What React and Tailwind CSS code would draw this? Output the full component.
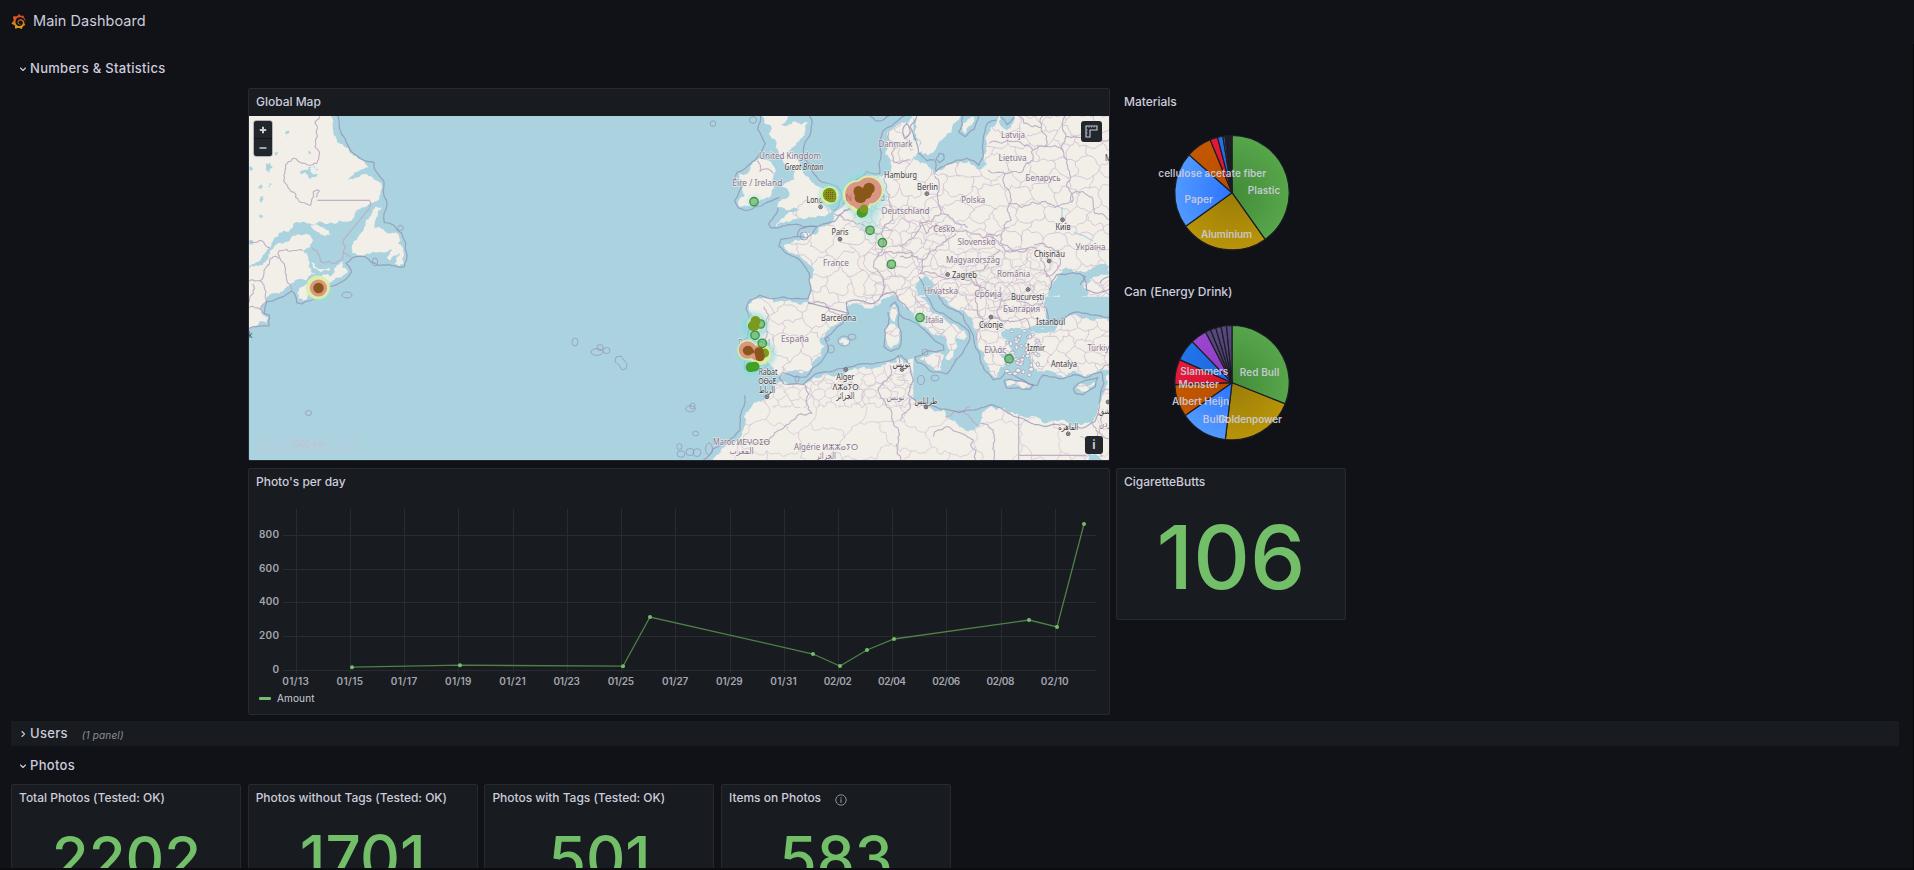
import React from "react";
import { SiGrafana } from "react-icons/si";

/* ---------- geometry helpers ---------- */

function parse(str) {
  return str.trim().split(/\s+/).map((p) => p.split(",").map(Number));
}

function makeRandom(seed) {
  let s = seed % 2147483647;
  return () => {
    s = (s * 16807) % 2147483647;
    return s / 2147483647 - 0.5;
  };
}

// Midpoint displacement: gives coastlines and borders a natural, uneven run.
// Long edges stay straight: they lie outside the frame or are surveyed lines.
function rough(str, amp = 0.3, closed = false, seed = 7, minLen = 5) {
  const pts = typeof str === "string" ? parse(str) : str;
  const rnd = makeRandom(seed * 977 + pts.length * 31);
  const out = [];
  const split = (a, b) => {
    const dx = b[0] - a[0];
    const dy = b[1] - a[1];
    const len = Math.hypot(dx, dy);
    if (len < minLen || len > 115) {
      out.push(b);
      return;
    }
    const k = rnd() * amp;
    const m = [(a[0] + b[0]) / 2 - dy * k, (a[1] + b[1]) / 2 + dx * k];
    split(a, m);
    split(m, b);
  };
  out.push(pts[0]);
  for (let i = 1; i < pts.length; i++) split(pts[i - 1], pts[i]);
  if (closed) split(pts[pts.length - 1], pts[0]);
  return "M" + out.map((p) => p[0].toFixed(1) + " " + p[1].toFixed(1)).join("L") + (closed ? "Z" : "");
}

// Honeycomb of uneven cells, used for administrative regions.
function cells(x0, y0, x1, y1, size, seed) {
  const rnd = makeRandom(seed);
  const grid = [];
  const h = size * 0.62;
  const rows = Math.ceil((y1 - y0) / h) + 1;
  const cols = Math.ceil((x1 - x0) / (size * 0.5)) + 1;
  for (let r = 0; r < rows; r++) {
    grid.push([]);
    for (let c = 0; c < cols; c++) {
      const zig = (r + c) % 2 ? size * 0.14 : -size * 0.14;
      grid[r].push([x0 + c * size * 0.5 + rnd() * size * 0.36, y0 + r * h + zig + rnd() * size * 0.36]);
    }
  }
  let d = "";
  for (let r = 0; r < rows; r++) {
    for (let c = 0; c < cols; c++) {
      if (c + 1 < cols) d += rough([grid[r][c], grid[r][c + 1]], 0.6, false, r * 50 + c + 3, 5);
      if (r + 1 < rows && (r + c) % 2) d += rough([grid[r][c], grid[r + 1][c]], 0.6, false, r * 37 + c + 9, 5);
    }
  }
  return d;
}

/* ---------- map data (three units per pixel in every sheet) ---------- */

const sheets = {
  atlantic: "translate(240 80) scale(0.33333)",
  west: "translate(660 110) scale(0.33333)",
  northeast: "translate(900 110) scale(0.33333)",
  southeast: "translate(900 280) scale(0.33333)",
};

const atlanticLand = [
  "20,100 262,100 278,130 282,165 296,190 325,205 340,228 372,240 384,262 352,275 330,292 316,304 340,298 372,282 398,292 418,306 422,340 400,368 375,382 345,400 320,425 280,430 240,424 200,430 162,428 145,455 100,480 75,520 55,545 20,560",
  "20,572 55,558 85,525 100,505 120,488 155,470 192,464 212,468 218,484 210,503 188,512 205,530 206,560 215,580 228,584 200,600 160,608 135,625 100,640 78,655 62,690 68,706 85,712 82,732 60,724 40,742 20,750",
  "172,640 190,620 215,605 240,590 262,582 285,592 250,620 210,640 190,662 175,655",
  "284,575 292,555 308,544 306,562 324,572 300,592 280,600 268,590",
  "214,546 226,560 248,568 268,560 270,570 240,578 220,565",
  "336,520 350,480 378,420 405,382 428,380 412,410 404,430 402,444 425,446 440,458 470,458 484,480 474,490 492,520 492,552 478,558 464,552 480,520 452,540 440,532 456,508 430,518 390,522 350,524",
  "212,438 248,442 264,450 279,466 255,469 232,456",
];

const atlanticLakes = [
  "78,262 92,250 98,262 90,280 82,272", "186,286 200,270 214,262 212,275 232,282 222,290 205,292",
  "27,262 38,264 36,272 27,272", "58,360 70,352 64,368", "27,484 40,486 36,494 27,492",
  "140,150 146,160 142,172", "216,262 226,270 236,268 226,262", "62,404 68,412 62,416", "60,315 68,322 62,330",
  "84,318 96,312 90,324", "204,216 214,214 210,222", "104,216 114,222 106,226",
];

const westLand = [
  "306,10 386,10 378,34 362,44 402,34 442,36 436,60 420,88 402,110 384,122 398,134 420,160 432,192 452,212 470,228 482,234 522,238 532,254 524,276 500,286 516,306 494,320 462,322 430,328 408,326 392,334 372,338 348,352 356,336 372,324 392,306 420,300 408,294 378,302 352,290 362,272 388,258 384,240 366,228 380,218 402,210 408,184 386,174 374,164 368,142 356,128 346,112 352,96 326,74 334,52 312,36",
  "272,168 292,150 322,150 336,160 346,186 338,206 342,226 330,262 300,270 262,288 240,290 234,276 254,256 246,236 252,214 236,206 238,192 262,190",
  "760,20 730,38 706,52 684,66 680,100 676,132 692,158 682,192 664,202 632,196 602,214 590,244 570,266 550,290 520,312 522,330 498,346 478,352 468,374 446,370 426,362 432,390 402,392 372,404 384,424 414,434 438,454 462,482 456,540 446,578 400,576 342,578 300,566 284,566 264,584 278,632 276,674 254,710 246,724 268,742 262,772 292,768 330,762 342,790 364,800 404,780 436,784 462,752 484,740 494,710 480,686 500,664 534,640 564,612 562,588 600,584 640,592 664,570 696,556 726,580 760,610",
  "690,604 706,584 713,608 702,636 690,622",
  "680,652 702,642 719,656 710,704 692,714 682,700",
  "536,694 556,684 572,692 556,708",
  "760,742 700,758 676,764 652,772 610,770 560,784 500,790 462,802 434,824 392,824 358,816 340,832 320,858 282,878 252,918 246,968 222,1000 182,1020 150,1060 760,1060",
];

const northeastLand = ["-10,150 20,160 50,150 78,160 96,176 104,198 130,176 170,160 206,152 226,170 240,180 262,160 258,110 266,70 290,40 300,10 640,10 640,560 -10,560",
  "34,10 182,10 160,40 156,66 132,84 110,112 84,136 66,130 62,92 44,66",
  "188,56 204,28 222,20 214,46 196,70", "0,98 20,92 26,120 8,126", "34,96 58,92 66,124 44,140 32,122"];
const northeastWater = [
  "300,10 296,34 320,62 334,50 344,28 336,10",
  "52,560 58,510 78,498 98,514 112,560",
  "448,560 460,520 478,492 500,472 516,476 522,486 560,484 578,474 627,466 627,492 584,500 546,520 560,560",
];
const southeastLand = [
  "-10,-10 44,-10 50,20 62,52 86,74 98,102 140,126 176,144 202,168 196,178 166,162 170,186 162,214 148,242 138,238 150,214 142,180 118,166 88,152 52,120 20,84 -10,54",
  "60,240 84,230 132,226 124,248 122,272 98,262",
  "82,-10 102,34 142,62 182,88 216,118 228,150 232,184 252,216 262,250 272,282 292,292 300,262 316,256 314,238 296,222 330,226 344,236 330,200 306,170 304,156 330,144 378,146 402,136 440,118 438,92 430,72 446,34 472,14 494,-10",
  "388,166 404,150 440,152 470,144 486,128 516,106 560,112 640,126 640,272 604,266 560,286 522,272 492,292 470,284 440,270 414,276 400,250 384,212",
  "318,304 350,308 390,314 386,323 322,318",
  "528,322 548,312 592,298 574,320 546,336",
  "640,272 616,288 606,350 592,400 576,430 540,434 480,420 440,430 380,414 356,402 312,384 270,380 246,398 242,426 222,452 192,446 142,414 130,388 92,384 60,372 34,350 -10,360 -10,560 640,560",
  "-10,236 8,240 12,268 26,300 10,334 -10,372",
  "552,-10 566,24 594,34 640,16 640,-10",
];
const southeastWater = ["400,154 414,142 448,144 468,150 440,160 410,160", "536,466 556,500 566,540 584,560 606,560 590,524 574,524"];

const atlanticSea = [
  "288,100 298,145 315,175 340,220 385,245 402,248 405,270 432,305 430,335 440,362 432,400 433,428 460,435 485,460 500,520 493,560 480,562 415,556 375,530 335,535 318,550 335,575 325,590 300,608 270,620 250,645 215,660 185,672 170,668 163,640 155,633 130,650 100,662 80,665 72,700 88,705 88,738 60,738 20,750",
];
const atlanticBorders = [
  "240,100 225,125 232,170 225,200 238,215 230,250 205,255 185,250 160,235 145,245 135,270 150,330 165,340 175,360 213,375 220,335 238,332 228,352",
  "20,612 60,602 80,560 100,530 120,535 134,560 140,600 155,630",
  "60,604 60,688", "118,534 118,512 140,508 188,512", "20,686 58,686 70,700",
  "388,385 310,480 310,518 332,530", "310,518 290,550 245,546 230,512 215,502", "20,485 90,502", "38,612 40,640 27,668",
];
const westSea = [
  "300,10 293,58 316,100 292,142 262,168 232,186 226,210 244,234 224,272 236,294 268,300 304,288 344,268 358,262",
  "354,292 348,312 326,342 332,354 352,354 386,344 430,350 476,348 524,334 548,308 578,284",
  "444,10 456,40 440,90 430,122 442,156 462,192 486,216 530,228 546,258 536,290 520,302",
  "412,380 420,356 440,350 470,350", "470,352 440,384 412,380 392,384 362,388 356,408 372,424 404,440 428,460 448,490 452,530 444,566 400,566 340,566 300,556 270,570 258,596 268,640 264,680 240,712 236,730 256,750 254,778",
  "660,190 620,184 590,208 574,246 548,284", "660,190 664,130 660,90 672,60 716,30 736,16",
  "444,578 566,610 560,576 600,572 640,580 668,556 704,546 716,570 746,600",
  "566,610 520,664 496,690 506,716 484,756 440,800 402,800 370,788 358,804 372,822 430,824 470,790 560,772 640,762 690,752 716,736 720,760",
  "254,856 240,920 240,960 200,996 160,1016 130,1050",
  "690,590 706,576 718,610 716,650 724,680 716,716 692,724 672,710 674,660 686,640 684,606",
  "630,18 646,32 670,30 690,16",
];
const westBorders = [
  "520,312 552,330 600,340 632,360 664,372 672,400 652,440 640,470 668,500 660,560", "550,300 590,312 612,316", "664,372 700,330 690,280 680,230 672,204",
  "444,578 500,590 562,612", "312,590 320,640 314,690 326,740 314,774", "652,440 700,430 760,430",
  "434,826 440,880 456,910 400,930 360,960 300,1000 230,1004", "690,766 660,830 680,890 716,960 722,1050", "292,152 300,184 330,180 340,190", "684,66 700,156 720,160 752,150",
];
const northeastSea = [
  "50,18 30,50 48,92 56,130 80,152 104,150 108,184 140,164 200,144 236,166 250,140 250,80 262,40 290,30", "188,18 176,66 196,80 222,58 236,18",
  "118,130 108,146 118,158 132,148 130,132 118,130", "448,540 470,494 520,488 556,500 540,524", "600,520 612,505 627,500", "8,60 20,40 30,70 14,86 8,60", "300,20 322,44 342,22",
];
const northeastBorders = [
  "104,198 112,250 122,312 60,336 78,372 140,346 196,360 250,384 304,374 334,330 322,296 326,240 314,190 264,180",
  "268,100 300,98 346,94 392,112 400,150 378,160 366,186 316,190", "340,10 372,40 424,52 430,18", "424,52 434,110 400,122", "434,110 490,124 506,180 500,230 516,276 466,292 400,276 330,280",
  "516,276 516,252 576,262 584,310 627,328", "122,312 160,330 204,352", "250,384 312,414 402,412 420,430 444,500", "402,404 450,412 478,440 470,480 438,500", "304,374 300,400 340,424 384,414",
  "60,336 0,410", "0,440 66,450 110,410 168,370", "66,450 60,490 120,500 180,500 250,480 300,420", "490,124 498,80 560,86 627,90", "498,80 496,18", "180,500 240,530 260,540",
];
const southeastSea = [
  "56,-10 76,44 106,92 152,116 206,152 210,176 176,232 162,252 140,282 96,276 52,248 44,232 84,212 132,210 130,196 86,162 36,124 0,104",
  "86,20 130,72 190,106 212,150 222,182 240,226 252,268 280,300 300,296 316,276 360,296 412,316 428,286 478,296 520,284 556,294 604,276 612,310 598,380 584,426 548,444 486,432 438,440 352,412 312,390 270,374 232,388",
  "232,388 122,388 80,376 50,368 24,344 40,300 30,262 18,240 0,224", "432,76 444,120 480,122 520,98 560,100 627,112", "550,-10 560,30 594,40 627,28", "520,326 546,306 594,292 586,320 548,344 526,340 520,326", "312,300 350,302 400,314 390,328 320,324 312,300",
];
const southeastBorders = [
  "232,180 250,130 232,80 240,20 220,-10", "250,130 300,120 340,124 380,116 390,150", "300,120 306,60 300,20", "306,60 370,66 430,70", "356,404 356,560", "136,412 192,398 234,440", "192,398 210,380", "30,356 20,396 0,420",
  "578,430 590,490 606,530", "604,268 627,252", "600,340 627,330", "590,402 606,410 600,460 627,476", "356,526 560,526", "100,470 140,440 220,480 222,560", "242,430 280,450 290,560",
];

const capitals = [
  [820.6, 206.8], [840, 239.2], [845.8, 369.6], [767, 396.8], [926.8, 193.7], [1062.5, 219.7], [1049.2, 261], [947.6, 274.5], [1028, 289.5], [991, 317], [926, 407], [1068.2, 433.8], [902, 369.5], [1108, 402],
];

// text, centre x, baseline, drawn width, kind
const labels = [
  ["United Kingdom", 790, 158.7, 62, "country"],
  ["Great Britain", 804, 169.8, 39, "island"],
  ["Éire / Ireland", 757.3, 185.6, 50, "country"],
  ["London", 819, 202.8, 25, "city"],
  ["Danmark", 895.5, 147, 34, "country"],
  ["Hamburg", 900.5, 177.6, 33, "city"],
  ["Berlin", 927.5, 189.6, 21, "city"],
  ["Nederland", 865, 200.6, 40, "country"],
  ["Deutschland", 905.5, 214, 48, "country"],
  ["Paris", 840, 235.4, 17, "city"],
  ["France", 836, 266.4, 26, "country"],
  ["Barcelona", 838.6, 320.7, 35, "city"],
  ["España", 795, 341.8, 28, "country"],
  ["Portugal", 754, 346.4, 32, "country"],
  ["Rabat", 768, 374.6, 19, "city"],
  ["ⵔⴱⴰⵟ", 767.3, 383.8, 18, "city"],
  ["الرباط", 767, 393.4, 16, "city"],
  ["Alger", 845.3, 380.2, 18, "city"],
  ["ⴷⵣⴰⵢⵔ", 845.5, 389.8, 26, "city"],
  ["الجزائر", 845.4, 398.8, 18, "city"],
  ["Maroc ⵍⵎⵖⵔⵉⴱ", 741.6, 445.2, 57, "country"],
  ["المغرب", 741.6, 454.4, 24, "country"],
  ["Algérie ⵍⵣⵣⴰⵢⵔ", 826, 449.8, 64, "country"],
  ["الجزائر", 826, 459.4, 20, "country"],
  ["تونس", 901.5, 367.2, 18, "city"],
  ["تونس", 895.5, 400.4, 18, "country"],
  ["Latvija", 1013, 138, 24, "country"],
  ["Lietuva", 1012.6, 161.4, 28, "country"],
  ["Беларусь", 1043, 181.4, 35, "country"],
  ["Polska", 973.3, 203.2, 24, "country"],
  ["Česko", 944.2, 231.6, 22, "country"],
  ["Київ", 1063, 229.8, 15, "city"],
  ["Slovensko", 976.6, 245, 38, "country"],
  ["Україна", 1090.5, 249.8, 30, "country"],
  ["Chișinău", 1049.4, 257.4, 31, "city"],
  ["Magyarország", 973, 262.8, 54, "country"],
  ["Zagreb", 964.5, 278, 25, "city"],
  ["România", 1013.6, 276.6, 33, "country"],
  ["Hrvatska", 941, 294, 34, "country"],
  ["Србија", 988, 297, 27, "country"],
  ["București", 1027.6, 300.4, 33, "city"],
  ["България", 1021.6, 312.2, 37, "country"],
  ["Italia", 934.3, 322.8, 18, "country"],
  ["Скопје", 991, 328, 24, "city"],
  ["İstanbul", 1050.6, 324.8, 29, "city"],
  ["Ελλάς", 995.3, 352.6, 22, "country"],
  ["İzmir", 1036, 351.2, 18, "city"],
  ["Türkiye", 1100.5, 350.8, 26, "country"],
  ["Antalya", 1064, 366.6, 26, "city"],
  ["طرابلس", 926, 404.4, 23, "city"],
  ["القاهرة", 1068.2, 430.4, 20, "city"],
  ["دمشق", 1108, 413.5, 18, "city"],
  ["الأردن", 1108, 427, 18, "country"],
  ["Москва", 1118, 160.5, 26, "city"],
];

const greens = [
  [754, 201.7], [870, 230.3], [882.4, 242.7], [891.4, 264.3], [755, 335.3], [762.3, 343.3], [750.5, 367.2], [754.5, 366.6], [861.5, 212.8], [863, 211.6], [760.5, 324], [752.8, 326],
  [920, 317.5], [1009, 358.7],
];

function MapLabel({ item }) {
  const [text, x, y, w, kind] = item;
  const fill = kind === "country" ? "#85748f" : "#403d46";
  return (
    <text
      x={x}
      y={y}
      textAnchor="middle"
      textLength={w}
      lengthAdjust="spacingAndGlyphs"
      fontSize={8.7}
      fontStyle={kind === "island" ? "italic" : "normal"}
      fontFamily="'Noto Sans', 'DejaVu Sans', sans-serif"
      fill={fill}
      stroke="#f6f2ee"
      strokeOpacity="0.75"
      strokeWidth="1.4"
      strokeLinejoin="round"
      paintOrder="stroke"
    >
      {text}
    </text>
  );
}

function Lines({ list, sheet, sea }) {
  return (
    <g transform={sheets[sheet]} fill="none" stroke={sea ? "#8f8bb0" : "#bba9c2"} strokeOpacity={sea ? 0.7 : 0.9} strokeWidth={sea ? 3.6 : 3.3} strokeLinejoin="round">
      {list.map((s, i) => (
        <path key={i} d={rough(s, sea ? 0.2 : 0.42, false, i + 4, sea ? 16 : 9)} />
      ))}
    </g>
  );
}

function Shapes({ list, sheet, fill, amp = 0.42 }) {
  return (
    <g transform={sheets[sheet]} fill={fill}>
      {list.map((s, i) => (
        <path key={i} d={rough(s, amp, true, i + 2, 4)} />
      ))}
    </g>
  );
}

const LAND = "#f2efe9";
const WATER = "#aad3df";

function IsleRings() {
  const rings = [
    [575, 342, 3, 4], [597, 352, 6, 3.4], [600, 347.5, 3, 3], [606.5, 350.5, 3.4, 3], [347, 295, 5, 3], [308.5, 413, 3, 2.6], [400.5, 228, 2.8, 2.6], [375, 262, 2.6, 4],
    [713, 123.6, 2.8, 2.8], [753, 120, 3.6, 3.4], [695.6, 433.6, 3, 2.4], [690.5, 408.8, 5, 3], [692.5, 406, 2.6, 3], [679.4, 446.6, 2.6, 3], [681, 454, 4, 3.2], [690, 452, 4, 3.6], [697, 452.6, 4, 4], [709, 449, 3.4, 6],
    [831, 349, 3.4, 4], [844, 341, 6, 5], [852, 337, 4, 3], [797, 379, 2, 3], [804, 236, 4, 4], [935, 378, 4, 3], [921, 380, 3.5, 4.5], [925, 352, 3, 3], [827, 339, 2.4, 2],
  ];
  return (
    <g fill="none" stroke="#9794b6" strokeOpacity="0.75" strokeWidth="1">
      {rings.map((r, i) => (
        <ellipse key={i} cx={r[0]} cy={r[1]} rx={r[2]} ry={r[3]} />
      ))}
      <path d="M616 357l5-1 2 3 4 5-1 5-4 1-3-5-4-3z" />
    </g>
  );
}

function Aegean() {
  const rnd = makeRandom(4242);
  return (
    <g fill={LAND} stroke="#9794b6" strokeOpacity="0.7" strokeWidth="0.9">
      {Array.from({ length: 46 }, (_, i) => {
        const t = rnd() + 0.5;
        const x = 1006 + t * 30 + rnd() * 8;
        const y = 331 + (rnd() + 0.5) * 46;
        return <ellipse key={i} cx={x} cy={y} rx={1.4 + Math.abs(rnd()) * 3} ry={1.2 + Math.abs(rnd()) * 2.2} />;
      })}
    </g>
  );
}

function Heat() {
  return (
    <g>
      <defs>
        <radialGradient id="halo">
          <stop offset="0" stopColor="#7fd8d0" stopOpacity="0.75" />
          <stop offset="0.7" stopColor="#8fdcdc" stopOpacity="0.5" />
          <stop offset="1" stopColor="#a9e0ec" stopOpacity="0" />
        </radialGradient>
        <pattern id="dots" width="2" height="2" patternUnits="userSpaceOnUse">
          <rect width="1" height="1" fill="#a03c10" />
        </pattern>
      </defs>
      <g fill="url(#halo)">
        <circle cx="319" cy="290" r="14" />
        <circle cx="832" cy="196" r="16" />
        <circle cx="864" cy="194" r="27" />
        <circle cx="866" cy="216" r="16" opacity="0.6" />
        <circle cx="754" cy="326" r="17" />
        <circle cx="750" cy="352" r="18" />
        <circle cx="763" cy="354" r="16" />
        <circle cx="751" cy="368" r="12" />
        <circle cx="755" cy="203" r="11" opacity="0.3" />
        <circle cx="873" cy="232" r="12" opacity="0.25" />
        <circle cx="920" cy="319" r="11" opacity="0.3" />
      </g>
      <g fill="#dcefa2" fillOpacity="0.95">
        <circle cx="318" cy="287.6" r="12" />
        <circle cx="829.5" cy="195.3" r="9.2" />
        <circle cx="857" cy="194.5" r="14.2" />
        <circle cx="868.5" cy="190.5" r="15" />
        <circle cx="860" cy="203" r="11" />
        <circle cx="747.5" cy="350" r="10.4" />
        <circle cx="760" cy="354" r="11" />
        <circle cx="755" cy="324" r="8" opacity="0.7" />
      </g>
      <g fill="#db9585">
        <circle cx="318.4" cy="288" r="8.6" />
        <circle cx="858" cy="194.5" r="12.8" />
        <circle cx="868.5" cy="190.6" r="13.2" />
        <circle cx="861" cy="201.5" r="8.6" />
        <circle cx="747.5" cy="350" r="8.8" />
        <circle cx="757" cy="353" r="7.4" />
      </g>
      <text x="845.500" y="200.600" fontSize="8.700" fontFamily="'Noto Sans', sans-serif" fill="#b0525c" opacity="0.7">N</text>
      <g fill="#58ad57" fillOpacity="0.62" stroke="#379642" strokeWidth="1.3">
        {greens.map((g, i) => (
          <circle key={i} cx={g[0]} cy={g[1]} r="4.2" />
        ))}
      </g>
      <g fill="#43a025">
        <circle cx="862.5" cy="212.4" r="4.8" />
        <circle cx="751" cy="367.4" r="4.6" />
        <circle cx="755" cy="366.4" r="4.4" />
      </g>
      <g fill="#7a9a22">
        <circle cx="829.5" cy="194.6" r="6.8" />
        <circle cx="831.5" cy="197.6" r="5" />
        <circle cx="755.5" cy="321" r="5" />
        <circle cx="754" cy="325.6" r="5.4" />
        <circle cx="864" cy="209" r="4.4" />
        <circle cx="764.5" cy="353" r="4.6" />
      </g>
      <circle cx="829.6" cy="194.8" r="5" fill="url(#dots)" />
      <g fill="#8a571b">
        <circle cx="318.5" cy="288" r="5.2" />
        <ellipse cx="858.5" cy="191.5" rx="5" ry="5.6" />
        <circle cx="869" cy="188.5" r="5.8" />
        <circle cx="866" cy="193" r="6" />
        <ellipse cx="860.5" cy="197.5" rx="6" ry="5.6" />
        <ellipse cx="748" cy="350.6" rx="5.2" ry="4.8" />
        <circle cx="752" cy="351.4" r="2.2" />
        <circle cx="759" cy="352" r="4.8" />
        <circle cx="760" cy="356.5" r="4.8" />
      </g>
    </g>
  );
}

function WorldMap() {
  return (
    <svg className="block h-[344px] w-[860px]" viewBox="249 116 860 344">
      <defs>
        <clipPath id="westClip">
          {westLand.slice(0, 6).map((s, i) => (
            <path key={i} transform={sheets.west} d={rough(s, 0.42, true, i + 2, 4)} />
          ))}
          <path transform={sheets.northeast} d={rough(northeastLand[0], 0.42, true, 2, 4)} />
          {southeastLand.filter((_, i) => i !== 6).map((s, i) => (
            <path key={"s" + i} transform={sheets.southeast} d={rough(s, 0.2, true, i + 2, 4)} />
          ))}
        </clipPath>
        <clipPath id="africaClip">
          <path transform={sheets.west} d={rough(westLand[6], 0.42, true, 8, 4)} />
          <path transform={sheets.southeast} d={rough(southeastLand[6], 0.42, true, 8, 4)} />
        </clipPath>
        <clipPath id="maghrebClip">
          <path d="M760 366h162v42h-150z" />
        </clipPath>
      </defs>
      <rect x="249" y="116" width="860" height="344" fill={WATER} />
      <Shapes list={atlanticLand} sheet="atlantic" fill={LAND} />
      <Shapes list={atlanticLakes} sheet="atlantic" fill={WATER} amp={0.9} />
      <Shapes list={westLand} sheet="west" fill={LAND} />
      <Shapes list={northeastLand} sheet="northeast" fill={LAND} />
      <Shapes list={southeastLand} sheet="southeast" fill={LAND} />
      <g clipPath="url(#westClip)" fill="none" stroke="#c6b5cb" strokeWidth="0.75" strokeOpacity="0.85">
        <path d={cells(760, 210, 930, 380, 26, 91)} />
        <path d={cells(862, 116, 1115, 300, 24, 17)} />
        <path d={cells(915, 285, 1115, 380, 18, 53)} />
        <path d={cells(960, 252, 1050, 290, 13, 77)} opacity="0.6" />
      </g>
      <g clipPath="url(#africaClip)" fill="none" stroke="#c9b9ce" strokeWidth="0.75" strokeOpacity="0.75">
        <path d={cells(700, 395, 1115, 470, 46, 29)} />
        <g clipPath="url(#maghrebClip)">
          <path d={cells(760, 366, 925, 412, 13, 39)} />
        </g>
      </g>
      <Shapes list={northeastWater} sheet="northeast" fill={WATER} />
      <Shapes list={southeastWater} sheet="southeast" fill={WATER} />
      <path d="M1062 207v12M1074 232l10 4 9 5" stroke={WATER} strokeWidth="1.2" fill="none" />
      <Lines list={atlanticBorders} sheet="atlantic" />
      <Lines list={["232,361 388,361 388,382"]} sheet="atlantic" />
      <Lines list={westBorders} sheet="west" />
      <Lines list={northeastBorders} sheet="northeast" />
      <Lines list={southeastBorders} sheet="southeast" />
      <Lines list={atlanticSea} sheet="atlantic" sea />
      <Lines list={westSea} sheet="west" sea />
      <Lines list={northeastSea} sheet="northeast" sea />
      <Lines list={southeastSea} sheet="southeast" sea />
      <Aegean />
      <IsleRings />
      <text x="248" y="338" fontSize="8.3" fontFamily="'Noto Sans', sans-serif" fill="#4a4750">k</text>
      {labels.map((l, i) => (
        <MapLabel key={i} item={l} />
      ))}
      <g fill="#b9b3b5" stroke="#5b5660" strokeWidth="0.9">
        {capitals.map((c, i) => (
          <g key={i}>
            <circle cx={c[0]} cy={c[1]} r="1.9" />
            <circle cx={c[0]} cy={c[1]} r="0.5" />
          </g>
        ))}
      </g>
      <Heat />
      <g stroke="#c3c3d2" fill="none" strokeOpacity="0.8">
        <rect x="257" y="436" width="102" height="16" fill="#c8c8dc" fillOpacity="0.12" stroke="none" />
        <path d="M258.5 437v13.500h99v-13.500" strokeDasharray="1.5 0.7" />
      </g>
      <text x="308.5" y="446.5" fontSize="8.5" textAnchor="middle" fontFamily="Inter, sans-serif" fill="#c3c3d2" textLength="34">1000 km</text>
    </svg>
  );
}

/* ---------- charts ---------- */

function slice(cx, cy, r, a0, a1) {
  const p = (a) => {
    const t = (a * Math.PI) / 180;
    return (cx + r * Math.sin(t)).toFixed(2) + " " + (cy - r * Math.cos(t)).toFixed(2);
  };
  return `M${cx} ${cy}L${p(a0)}A${r} ${r} 0 ${a1 - a0 > 180 ? 1 : 0} 1 ${p(a1)}Z`;
}

function Pie({ id, stops, labels: names }) {
  const ramps = {
    green: ["#438b38", "#56a64b"],
    yellow: ["#9a7d08", "#b99409"],
    blue: ["#2b74ff", "#5199ff"],
    orange: ["#b84d00", "#c45700"],
    red: ["#d8132c", "#e2193a"],
    deep: ["#1d66d8", "#2274ea"],
    purple: ["#8b3bbd", "#9d46d0"],
    plum: ["#4b3d6e", "#5a4880"],
    dark: ["#22232b", "#24262e"],
  };
  return (
    <svg className="absolute inset-0 h-full w-full" viewBox="1 1 228 181">
      <defs>
        {Object.entries(ramps).map(([k, v]) => (
          <radialGradient key={k} id={id + k} gradientUnits="userSpaceOnUse" cx="116" cy="104.5" r="57">
            <stop offset="0" stopColor={v[0]} />
            <stop offset="1" stopColor={v[1]} />
          </radialGradient>
        ))}
      </defs>
      {stops.map((s, i) => (
        <path key={i} d={slice(116, 104.7, 57.2, i ? stops[i - 1][0] : 0, s[0])} fill={`url(#${id}${s[1]})`} stroke="#1c1d24" strokeWidth="1.2" strokeLinejoin="round" />
      ))}
      {names.map((n) => (
        <text key={n[0]} x={n[1]} y={n[2]} textAnchor="middle" textLength={n[3]} fontFamily="Inter, sans-serif" fontSize="10" fontWeight="600" fill="#ccccdc" fillOpacity="0.95">
          {n[0]}
        </text>
      ))}
    </svg>
  );
}

const materials = [[144.7, "green"], [234, "yellow"], [311.4, "blue"], [337.6, "orange"], [345.4, "red"], [350.8, "deep"], [353, "plum"], [354.5, "plum"], [356, "dark"], [358, "dark"], [360, "dark"]];
const materialNames = [["cellulose acetate fiber", 96.3, 89.2, 108], ["Plastic", 148, 106.2, 32.5], ["Paper", 82.8, 115.2, 28.5], ["Aluminium", 110.5, 150.2, 51]];
const cans = [[111.7, "green"], [186.7, "yellow"], [235, "blue"], [268, "orange"], [293.8, "red"], [316, "deep"], [332.5, "purple"], [338, "plum"], [343.5, "plum"], [349, "plum"], [354.5, "plum"], [360, "plum"]];
const canNames = [["Red Bull", 143.6, 98.4, 39.5], ["Goldenpower", 134, 145.4, 64], ["Bullit", 99.2, 145.4, 25], ["Albert Heijn", 84.5, 127.4, 57], ["Monster", 82.8, 110.4, 40.5], ["Slammers", 88.3, 97.2, 48]];

const days = ["01/13", "01/15", "01/17", "01/19", "01/21", "01/23", "01/25", "01/27", "01/29", "01/31", "02/02", "02/04", "02/06", "02/08", "02/10"];
const series = [[352, 667.2], [460, 665.2], [623, 666.2], [650, 617], [813, 654], [840, 666], [867, 650], [894, 639], [1029, 620], [1057, 627], [1084, 524]];
const levels = [[800, 535.5], [600, 569.5], [400, 602.5], [200, 636.5], [0, 670.5]];

function PhotosChart() {
  return (
    <svg className="block h-[192px] w-[860px]" viewBox="249 496 860 192">
      <g stroke="#282b2f" strokeWidth="1" fill="none">
        {levels.map((l) => (
          <path key={l[0]} d={`M283 ${l[1]}H1096.5`} />
        ))}
        {days.map((d, i) => (
          <path key={d} d={`M${Math.floor(296.3 + i * 54.22) + 0.5} 509V673`} />
        ))}
      </g>
      <g fontFamily="Inter, sans-serif" fontSize="10" fontWeight="600" fill="#a4a5b0">
        {levels.map((l) => (
          <text key={l[0]} x="279" y={l[1] + 2.8} textAnchor="end" textLength={l[0] ? 20 : 6.5}>{l[0]}</text>
        ))}
        {days.map((d, i) => (
          <text key={d} x={295.6 + i * 54.22} y="685.2" textAnchor="middle" textLength={i > 9 ? 28 : 26.5}>{d}</text>
        ))}
      </g>
      <polyline points={series.map((p) => p.join(",")).join(" ")} fill="none" stroke="#4f8148" strokeWidth="1.3" />
      {series.map((p) => (
        <circle key={p[0]} cx={p[0]} cy={p[1]} r="2" fill="#73bf69" />
      ))}
    </svg>
  );
}

/* ---------- page pieces ---------- */

function Panel({ title, className = "", info = false, bare = false, children }) {
  return (
    <section className={`relative shrink-0 overflow-hidden rounded-[2px] border ${bare ? "border-transparent" : "border-[#26292e] bg-[#181b1f]"} ${className}`}>
      <h2 className="flex h-[27px] items-center pb-[2px] pl-[7px] text-[12px] font-medium leading-none tracking-[-0.02px] text-[#ccccdc]">
        {title}
        {info && (
          <svg className="ml-[14px] mt-[4px] size-[12px]" viewBox="0 0 12 12" fill="none" stroke="#8e8f99">
            <circle cx="6" cy="6" r="5.2" />
            <path d="M6 5.300v3.400M6 3.200v1.200" strokeWidth="1.2" />
          </svg>
        )}
      </h2>
      {children}
    </section>
  );
}

function Chevron({ open }) {
  return (
    <svg className="mt-px size-[8px] shrink-0" viewBox="0 0 8 8" fill="none" stroke="#ccccdc" strokeWidth="1.1" strokeLinecap="round" strokeLinejoin="round">
      <path d={open ? "M1.500 3l2.500 2.500L6.500 3" : "M3 1.500L5.500 4 3 6.500"} />
    </svg>
  );
}

function RowTitle({ open = true, note, className = "", children }) {
  return (
    <div className={`flex shrink-0 items-center ${className}`}>
      <Chevron open={open} />
      <span className="ml-[3px] text-[13px] font-medium leading-none tracking-[0.3px] text-[#ccccdc]">{children}</span>
      {note && <span className="ml-[14px] mt-[2px] text-[10px] italic leading-none tracking-[0.15px] text-[#8e8f99]">{note}</span>}
    </div>
  );
}

function MapButton({ className, children }) {
  return <div className={`flex items-center justify-center bg-[#22272b] text-[#ccccdc] ${className}`}>{children}</div>;
}

const photoStats = [
  ["Total Photos (Tested: OK)", "2202", "text-[60px] pl-px"],
  ["Photos without Tags (Tested: OK)", "1701", "text-[62px]"],
  ["Photos with Tags (Tested: OK)", "501", "text-[61px]"],
  ["Items on Photos", "583", "text-[60.5px]", true],
];

export default function App() {
  return (
    <div className="relative h-[870px] w-[1914px] overflow-hidden bg-[#111217] font-['Inter',sans-serif] antialiased">
      <header className="flex h-[42px] items-center pl-[11px]">
        <svg width="0" height="0" className="absolute">
          <defs>
            <linearGradient id="flame" x1="0" y1="0" x2="0" y2="1">
              <stop offset="0" stopColor="#e8392b" />
              <stop offset="0.5" stopColor="#e0701c" />
              <stop offset="1" stopColor="#d9ac10" />
            </linearGradient>
          </defs>
        </svg>
        <SiGrafana size={15} fill="url(#flame)" />
        <h1 className="ml-[7px] text-[14.5px] leading-none tracking-[0.03px] text-[#ccccdc]">Main Dashboard</h1>
      </header>

      <RowTitle className="h-[46px] pl-[19px] pt-[7px]">Numbers &amp; Statistics</RowTitle>

      <main className="flex h-[627px] gap-[6px] pl-[248px]">
        <div className="flex w-[862px] flex-col gap-[7px]">
          <Panel title="Global Map" className="h-[373px]">
            <WorldMap />
            <div className="absolute left-[5px] top-[32px] flex w-[18px] flex-col gap-px overflow-hidden rounded-[3px] bg-[#15181b] ring-1 ring-[#5a5f66]/40">
              <MapButton className="h-[17px]"><svg className="size-[8px]" viewBox="0 0 8 8" stroke="currentColor" strokeWidth="2"><path d="M4 0.800v6.400M0.800 4h6.400" /></svg></MapButton>
              <MapButton className="h-[17px]"><svg className="size-[8px]" viewBox="0 0 8 8" stroke="currentColor" strokeWidth="1.6"><path d="M0.500 4h7" /></svg></MapButton>
            </div>
            <MapButton className="absolute right-[7px] top-[32px] size-[21px] rounded-[3px]">
              <svg className="size-[13px]" viewBox="0 0 13 13" fill="none" stroke="currentColor" strokeWidth="1.1">
                <path d="M1 1h11v4H5v7H1z" />
                <path d="M4 1.500v1.200M6.500 1.500v1.200M9 1.500v1.200M1.500 5h1.200M1.500 8h1.200" strokeWidth="0.8" />
              </svg>
            </MapButton>
            <MapButton className="absolute bottom-[6px] right-[6px] size-[18px] rounded-[3px] text-[12px] font-bold leading-none">i</MapButton>
          </Panel>
          <Panel title="Photo's per day" className="h-[247px]">
            <PhotosChart />
            <div className="flex items-center gap-[6px] pl-[10px] pt-[5px]">
              <span className="h-[3px] w-[12px] rounded-[1px] bg-[#73bf69]" />
              <span className="text-[10px] leading-none tracking-[0.15px] text-[#ccccdc]">Amount</span>
            </div>
          </Panel>
        </div>
        <div className="flex w-[230px] flex-col gap-[7px]">
          <Panel title="Materials" bare className="h-[183px]">
            <Pie id="m" stops={materials} labels={materialNames} />
          </Panel>
          <Panel title="Can (Energy Drink)" bare className="h-[183px]">
            <Pie id="c" stops={cans} labels={canNames} />
          </Panel>
          <Panel title="CigaretteButts" className="h-[152px]">
            <div className="flex h-[121px] items-center justify-center text-[88px] font-medium leading-none text-[#73bf69]">106</div>
          </Panel>
        </div>
      </main>

      <RowTitle open={false} note="(1 panel)" className="ml-[11px] mt-[6px] h-[25px] w-[1888px] bg-[#181b1f] pl-[8px]">Users</RowTitle>
      <RowTitle className="h-[38px] pl-[19px] pt-[1px]">Photos</RowTitle>

      <div className="flex gap-[6.7px] pl-[11px]">
        {photoStats.map(([title, value, size, info]) => (
          <Panel key={title} title={title} info={info} className="h-[152px] w-[230px]">
            <div className={`flex h-[92px] items-center justify-center font-medium leading-none text-[#73bf69] ${size}`}>{value}</div>
          </Panel>
        ))}
      </div>
      <div className="absolute inset-x-0 bottom-0 h-[2px] bg-[#0b0c0f]" />
      <div className="absolute bottom-0 right-0 top-[44px] w-px bg-[#050608]" />
    </div>
  );
}
